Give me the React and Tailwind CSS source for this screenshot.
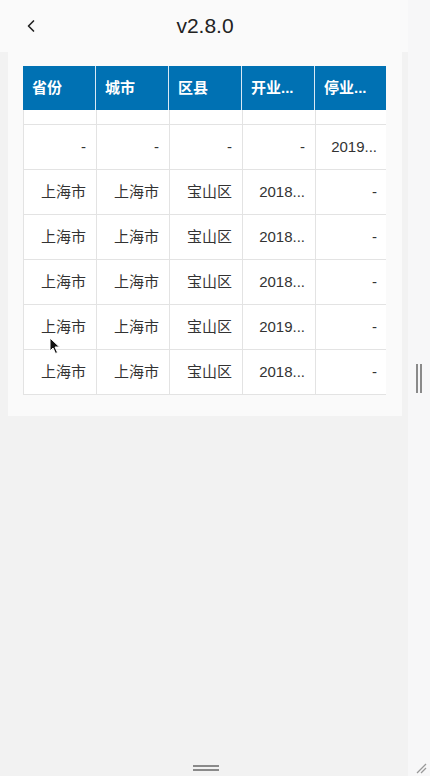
import React from 'react';
import { ChevronLeft } from 'lucide-react';

const rows = [
  ['-', '-', '-', '-', '2019...'],
  ['上海市', '上海市', '宝山区', '2018...', '-'],
  ['上海市', '上海市', '宝山区', '2018...', '-'],
  ['上海市', '上海市', '宝山区', '2018...', '-'],
  ['上海市', '上海市', '宝山区', '2019...', '-'],
  ['上海市', '上海市', '宝山区', '2018...', '-'],
];

const headers = ['省份', '城市', '区县', '开业...', '停业...'];

const font = { fontFamily: '"Liberation Sans", "Noto Sans CJK SC", sans-serif' };

export default function App() {
  return (
    <div className="relative flex h-[776px] w-[430px] overflow-hidden bg-[#f2f2f2]" style={font}>
      <div className="flex w-[408px] flex-col">
        <div className="flex h-[52px] items-center bg-[#fafafa] pl-[21px]">
          <ChevronLeft className="h-[20px] w-[20px] text-[#222]" strokeWidth={2} />
          <div className="flex-1 pr-[39px] text-center text-[21px] text-[#222]">v2.8.0</div>
        </div>
        <div className="mx-[8px] w-[394px] bg-[#fafafa] px-[15px] pb-[21px] pt-[14px]">
          <div className="w-[363px] bg-white">
            <div className="grid h-[44px] grid-cols-[72px_73px_73px_73px_72px] bg-[#0071b3]">
              {headers.map((h, i) => (
                <div
                  key={h}
                  className={`flex items-center pl-[9px] text-[15px] font-semibold text-white ${i > 0 ? 'border-l border-[#d8e9f5]' : ''}`}
                >
                  {h}
                </div>
              ))}
            </div>
            <div className="grid h-[15px] grid-cols-[72px_73px_73px_73px_72px] border-b border-l border-[#e3e3e3]">
              {headers.map((h, i) => (
                <div key={h} className={i > 0 ? 'border-l border-[#e3e3e3]' : ''} />
              ))}
            </div>
            {rows.map((r, ri) => (
              <div
                key={ri}
                className="grid h-[45px] grid-cols-[72px_73px_73px_73px_72px] border-b border-l border-[#e3e3e3]"
              >
                {r.map((c, i) => (
                  <div
                    key={i}
                    className={`flex items-center justify-end pr-[10px] text-[15px] text-[#333] ${i > 0 ? 'border-l border-[#e3e3e3]' : ''}`}
                  >
                    {c}
                  </div>
                ))}
              </div>
            ))}
          </div>
        </div>
        <div className="flex-1" />
      </div>
      <div className="flex w-[22px] flex-col items-center bg-[#f7f7f8]">
        <div className="h-[364px]" />
        <div className="flex gap-[2px]">
          <div className="h-[29px] w-[2px] bg-[#8a8a8a]" />
          <div className="h-[29px] w-[2px] bg-[#8a8a8a]" />
        </div>
      </div>
      <div className="absolute bottom-[5px] left-[193px] flex w-[26px] flex-col gap-[2px]">
        <div className="h-[2px] bg-[#8a8a8a]" />
        <div className="h-[2px] bg-[#8a8a8a]" />
      </div>
      <svg className="absolute bottom-[2px] right-[3px]" width="12" height="12" viewBox="0 0 12 12">
        <line x1="2" y1="11" x2="11" y2="2" stroke="#999" strokeWidth="1.2" />
        <line x1="6" y1="11" x2="11" y2="6" stroke="#999" strokeWidth="1.2" />
      </svg>
      <svg className="absolute left-[49px] top-[337px]" width="12" height="18" viewBox="0 0 12 18">
        <path d="M1 1 L1 14 L4 11 L6.5 16.5 L8.5 15.5 L6 10 L10.5 10 Z" fill="#111" stroke="#fff" strokeWidth="1" />
      </svg>
    </div>
  );
}
